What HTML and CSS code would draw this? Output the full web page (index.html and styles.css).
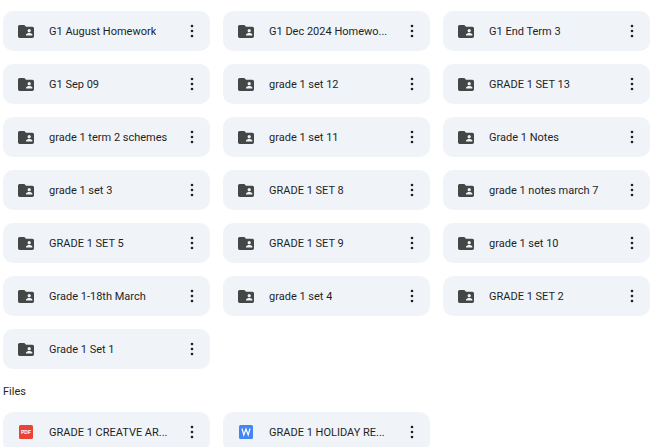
FILE: index.html
```
<!DOCTYPE html>
<html lang="en">
<head>
<meta charset="utf-8">
<title>Drive</title>
<link rel="stylesheet" href="styles.css">
</head>
<body>
<svg class="defs" aria-hidden="true">
  <symbol id="folder" viewBox="2 4 20 16"><path d="M20 6h-8l-2-2H4c-1.1 0-2 .9-2 2v12c0 1.1.9 2 2 2h16c1.1 0 2-.9 2-2V8c0-1.1-.9-2-2-2zm-4 3c1.100 0 2 .9 2 2s-.9 2-2 2-2-.9-2-2 .9-2 2-2zm4 8h-8v-1c0-1.330 2.670-2 4-2s4 .67 4 2v1z"/></symbol>
  <symbol id="dots" viewBox="0 0 4 14"><circle cx="2" cy="2" r="1.3"/><circle cx="2" cy="7" r="1.3"/><circle cx="2" cy="12" r="1.3"/></symbol>
</svg>
<main>
  <ul class="grid" id="folders" aria-label="Folders"></ul>
  <h2>Files</h2>
  <ul class="grid" aria-label="Files">
    <li class="card">
      <a href="#"><span class="icon"><svg width="14" height="14" viewBox="0 0 14 14" aria-hidden="true"><rect width="14" height="14" rx="1.5" fill="#ea4335"/><text class="pdf" x="7" y="9" text-anchor="middle">PDF</text></svg></span><span class="name">GRADE 1 CREATVE AR...</span></a>
      <button type="button" aria-label="More actions"><svg class="dots"><use href="#dots"/></svg></button>
    </li>
    <li class="card">
      <a href="#"><span class="icon"><svg width="14" height="14" viewBox="0 0 14 14" aria-hidden="true"><rect width="14" height="14" rx="1.5" fill="#4285f4"/><path d="M3 3.5l1.8 6.5L7 4l2.2 6L11 3.5" fill="none" stroke="#fff" stroke-width="1.2"/></svg></span><span class="name">GRADE 1 HOLIDAY RE...</span></a>
      <button type="button" aria-label="More actions"><svg class="dots"><use href="#dots"/></svg></button>
    </li>
  </ul>
</main>
<script src="folders.js"></script>
</body>
</html>
```
FILE: styles.css
```
* { box-sizing: border-box; }

body {
  margin: 0;
  background: #fff;
  color: #1f1f1f;
  font: 11px/20px "Google Sans", Roboto, sans-serif;
}

.defs { position: absolute; width: 0; height: 0; }

main { padding: 11px 11px 12px 3px; }

.grid {
  display: grid;
  grid-template-columns: repeat(3, 1fr);
  gap: 13px;
  margin: 0;
  padding: 0;
  list-style: none;
}

.card {
  display: flex;
  align-items: center;
  min-width: 0;
  height: 40px;
  padding-right: 8px;
  border-radius: 10px;
  background: #f0f4f9;
}

.card a {
  display: flex;
  flex: 1;
  align-items: center;
  min-width: 0;
  padding-left: 15px;
  color: inherit;
  text-decoration: none;
}

.icon {
  display: flex;
  flex: none;
  justify-content: center;
  width: 16px;
  margin-right: 15px;
}

.folder { width: 16px; height: 13px; fill: #444746; }

.name {
  padding-top: 2px;
  overflow: hidden;
  white-space: nowrap;
  text-overflow: ellipsis;
}

.card button {
  display: flex;
  flex: none;
  align-items: center;
  justify-content: center;
  width: 20px;
  height: 24px;
  padding: 0;
  border: 0;
  background: none;
}

.dots { width: 4px; height: 14px; fill: #1f1f1f; }

.pdf { fill: #fff; font: bold 5px "Liberation Sans", sans-serif; }

h2 {
  margin: 13px 0 10px;
  font-size: 11px;
  font-weight: 400;
  line-height: 20px;
}
```
FILE: folders.js
```
const folders = [
  "G1 August Homework", "G1 Dec 2024 Homewo...", "G1 End Term 3",
  "G1 Sep 09", "grade 1 set 12", "GRADE 1 SET 13",
  "grade 1 term 2 schemes", "grade 1 set 11", "Grade 1 Notes",
  "grade 1 set 3", "GRADE 1 SET 8", "grade 1 notes march 7",
  "GRADE 1 SET 5", "GRADE 1 SET 9", "grade 1 set 10",
  "Grade 1-18th March", "grade 1 set 4", "GRADE 1 SET 2",
  "Grade 1 Set 1"
];

document.getElementById("folders").innerHTML = folders.map(name => `
  <li class="card">
    <a href="#"><span class="icon"><svg class="folder" aria-hidden="true"><use href="#folder"/></svg></span><span class="name">${name}</span></a>
    <button type="button" aria-label="More actions"><svg class="dots"><use href="#dots"/></svg></button>
  </li>`).join("");
```
